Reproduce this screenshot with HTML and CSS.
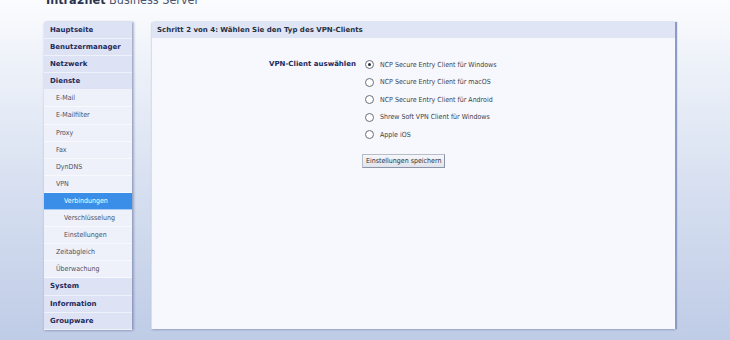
FILE: index.html
```html
<!DOCTYPE html>
<html lang="de">
<head>
<meta charset="utf-8">
<link rel="stylesheet" href="styles.css">
</head>
<body>
<div class="page">
  <div class="brand"><b>Intra2net</b> Business Server</div>
  <div class="main">
    <nav class="menu">
      <div class="item top">Hauptseite</div>
      <div class="item top">Benutzermanager</div>
      <div class="item top">Netzwerk</div>
      <div class="item top">Dienste</div>
      <div class="item sub">E-Mail</div>
      <div class="item sub">E-Mailfilter</div>
      <div class="item sub">Proxy</div>
      <div class="item sub">Fax</div>
      <div class="item sub">DynDNS</div>
      <div class="item sub">VPN</div>
      <div class="item sub2 active">Verbindungen</div>
      <div class="item sub2">Verschlüsselung</div>
      <div class="item sub2">Einstellungen</div>
      <div class="item sub">Zeitabgleich</div>
      <div class="item sub">Überwachung</div>
      <div class="item top">System</div>
      <div class="item top">Information</div>
      <div class="item top">Groupware</div>
    </nav>
    <section class="panel">
      <div class="panel-head">Schritt 2 von 4: Wählen Sie den Typ des VPN-Clients</div>
      <div class="panel-body">
        <div class="form-row">
          <div class="label">VPN-Client auswählen</div>
          <div class="options">
            <label class="opt"><span class="radio checked"></span>NCP Secure Entry Client für Windows</label>
            <label class="opt"><span class="radio"></span>NCP Secure Entry Client für macOS</label>
            <label class="opt"><span class="radio"></span>NCP Secure Entry Client für Android</label>
            <label class="opt"><span class="radio"></span>Shrew Soft VPN Client für Windows</label>
            <label class="opt"><span class="radio"></span>Apple iOS</label>
            <div class="btn">Einstellungen speichern</div>
          </div>
        </div>
      </div>
    </section>
  </div>
</div>
</body>
</html>
```

FILE: styles.css
```css
html, body {
  margin: 0;
  padding: 0;
  height: 100%;
}
body {
  font-family: "DejaVu Sans", Verdana, sans-serif;
  background: linear-gradient(to bottom, #fbfcfe 0px, #eef2f9 60px, #d5def0 200px, #bfcce6 340px);
  overflow: hidden;
}
.page {
  width: 730px;
  height: 340px;
}
.brand {
  height: 7px;
  margin-top: -7px;
  padding-left: 46px;
  font-size: 12.5px;
  line-height: 13px;
  color: #4a5570;
  white-space: nowrap;
  font-stretch: condensed;
}
.brand b {
  color: #2b3450;
}
.main {
  display: flex;
  gap: 20px;
  padding: 22px 0 0 44px;
}
.menu {
  width: 88px;
  display: flex;
  flex-direction: column;
  box-shadow: 2px 0 2px rgba(90, 105, 150, 0.45), 0 1px 2px rgba(90, 105, 150, 0.3);
  background: #eef1fa;
}
.item {
  height: 17.1px;
  line-height: 17px;
  font-size: 7px;
  white-space: nowrap;
  box-sizing: border-box;
  border-bottom: 1px solid rgba(255, 255, 255, 0.55);
}
.item.top {
  background: #dde3f4;
  color: #1c2a5c;
  font-weight: bold;
  padding-left: 6px;
}
.item.sub {
  background: #eef1fa;
  color: #4a5064;
  padding-left: 12px;
  font-stretch: condensed;
}
.item.sub2 {
  background: #eef1fa;
  color: #4a5064;
  padding-left: 20px;
  font-stretch: condensed;
}
.item.active {
  background: #3a8ee8;
  color: #ffffff;
}
.panel {
  width: 523px;
  height: 307px;
  display: flex;
  flex-direction: column;
  background: #f7f8fd;
  box-shadow: 2px 0 1px #8d9cc6, 0 1px 2px rgba(90, 105, 150, 0.4), -1px 0 0 #eef1f9;
}
.panel-head {
  height: 16px;
  line-height: 16px;
  background: #dfe5f5;
  font-size: 7px;
  font-weight: bold;
  color: #2a3040;
  padding-left: 5px;
}
.panel-body {
  flex: 1;
  padding-top: 18px;
}
.form-row {
  display: flex;
}
.label {
  width: 204px;
  text-align: right;
  font-size: 7px;
  font-weight: bold;
  color: #1c2a5c;
  line-height: 17.5px;
}
.options {
  display: flex;
  flex-direction: column;
  padding-left: 9px;
}
.opt {
  display: flex;
  align-items: center;
  height: 17.5px;
  font-size: 7px;
  color: #3a3e4a;
  white-space: nowrap;
  font-stretch: condensed;
}
.radio {
  width: 7px;
  height: 7px;
  border: 1px solid #6a6e78;
  border-radius: 50%;
  background: #fff;
  margin-right: 6px;
  position: relative;
  box-sizing: content-box;
}
.radio.checked::after {
  content: "";
  position: absolute;
  left: 2px;
  top: 2px;
  width: 3px;
  height: 3px;
  border-radius: 50%;
  background: #2a2e36;
}
.btn {
  align-self: flex-start;
  margin-top: 10px;
  margin-left: -3px;
  height: 14px;
  line-height: 13px;
  padding: 0 3px;
  font-size: 7px;
  color: #2a2e36;
  background: linear-gradient(#f6f7fa, #e1e4ec);
  border: 1px solid #b7bccb;
  border-right-color: #8d94a8;
  border-bottom-color: #8d94a8;
  box-sizing: border-box;
  white-space: nowrap;
  font-stretch: condensed;
}
```
